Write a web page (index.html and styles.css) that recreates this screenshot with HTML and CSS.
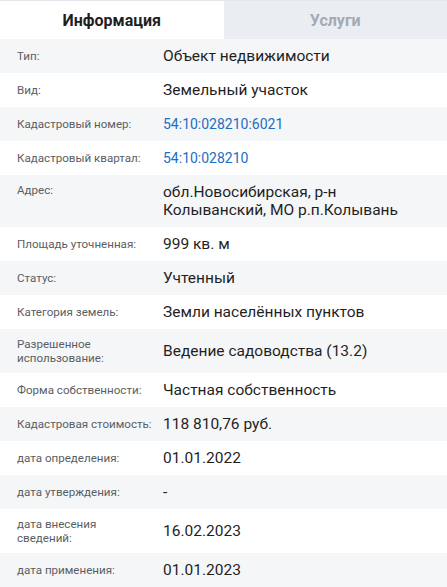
FILE: index.html
```html
<!DOCTYPE html>
<html lang="ru">
<head>
<meta charset="utf-8">
<link rel="stylesheet" href="styles.css">
</head>
<body>
<div class="card">
  <div class="tabs">
    <div class="tab tab-active">Информация</div>
    <div class="tab">Услуги</div>
  </div>
  <div class="rows">
    <div class="row"><div class="label">Тип:</div><div class="value">Объект недвижимости</div></div>
    <div class="row"><div class="label">Вид:</div><div class="value">Земельный участок</div></div>
    <div class="row"><div class="label">Кадастровый номер:</div><div class="value link">54:10:028210:6021</div></div>
    <div class="row"><div class="label">Кадастровый квартал:</div><div class="value link">54:10:028210</div></div>
    <div class="row row-top"><div class="label">Адрес:</div><div class="value">обл.Новосибирская, р-н Колыванский, МО р.п.Колывань</div></div>
    <div class="row"><div class="label">Площадь уточненная:</div><div class="value">999 кв. м</div></div>
    <div class="row"><div class="label">Статус:</div><div class="value">Учтенный</div></div>
    <div class="row"><div class="label">Категория земель:</div><div class="value">Земли населённых пунктов</div></div>
    <div class="row"><div class="label">Разрешенное<br>использование:</div><div class="value">Ведение садоводства (13.2)</div></div>
    <div class="row"><div class="label">Форма собственности:</div><div class="value">Частная собственность</div></div>
    <div class="row"><div class="label">Кадастровая стоимость:</div><div class="value">118 810,76 руб.</div></div>
    <div class="row"><div class="label">дата определения:</div><div class="value">01.01.2022</div></div>
    <div class="row"><div class="label">дата утверждения:</div><div class="value">-</div></div>
    <div class="row"><div class="label">дата внесения<br>сведений:</div><div class="value">16.02.2023</div></div>
    <div class="row"><div class="label">дата применения:</div><div class="value">01.01.2023</div></div>
  </div>
</div>
</body>
</html>
```
FILE: styles.css
```css
* { box-sizing: border-box; }
html, body {
  margin: 0;
  padding: 0;
  background: #ffffff;
}
body {
  font-family: Roboto, "Liberation Sans", Arial, sans-serif;
  color: #1f1f1f;
}
.card {
  width: 447px;
  overflow: hidden;
}
.tabs {
  display: flex;
  border-top: 1px solid #e3e7ec;
}
.tab {
  flex: 1 1 0;
  height: 38px;
  display: flex;
  align-items: center;
  justify-content: center;
  font-size: 16px;
  font-weight: 700;
  color: #a4aab3;
  background: #eaedf1;
}
.tab-active {
  background: #ffffff;
  color: #1f1f1f;
}
.rows {
  display: flex;
  flex-direction: column;
}
.row {
  display: flex;
  align-items: center;
  min-height: 34px;
  padding: 8px 17px;
}
.row:nth-child(odd) {
  background: #f5f6f8;
}
.row-top {
  align-items: flex-start;
}
.label {
  flex: 0 0 146px;
  font-size: 11.6px;
  line-height: 14px;
  color: #5a5e63;
}
.value {
  flex: 1 1 auto;
  font-size: 15.5px;
  line-height: 18px;
  color: #1f1f1f;
}
.link {
  color: #1b6ec2;
  font-size: 14px;
}
```
